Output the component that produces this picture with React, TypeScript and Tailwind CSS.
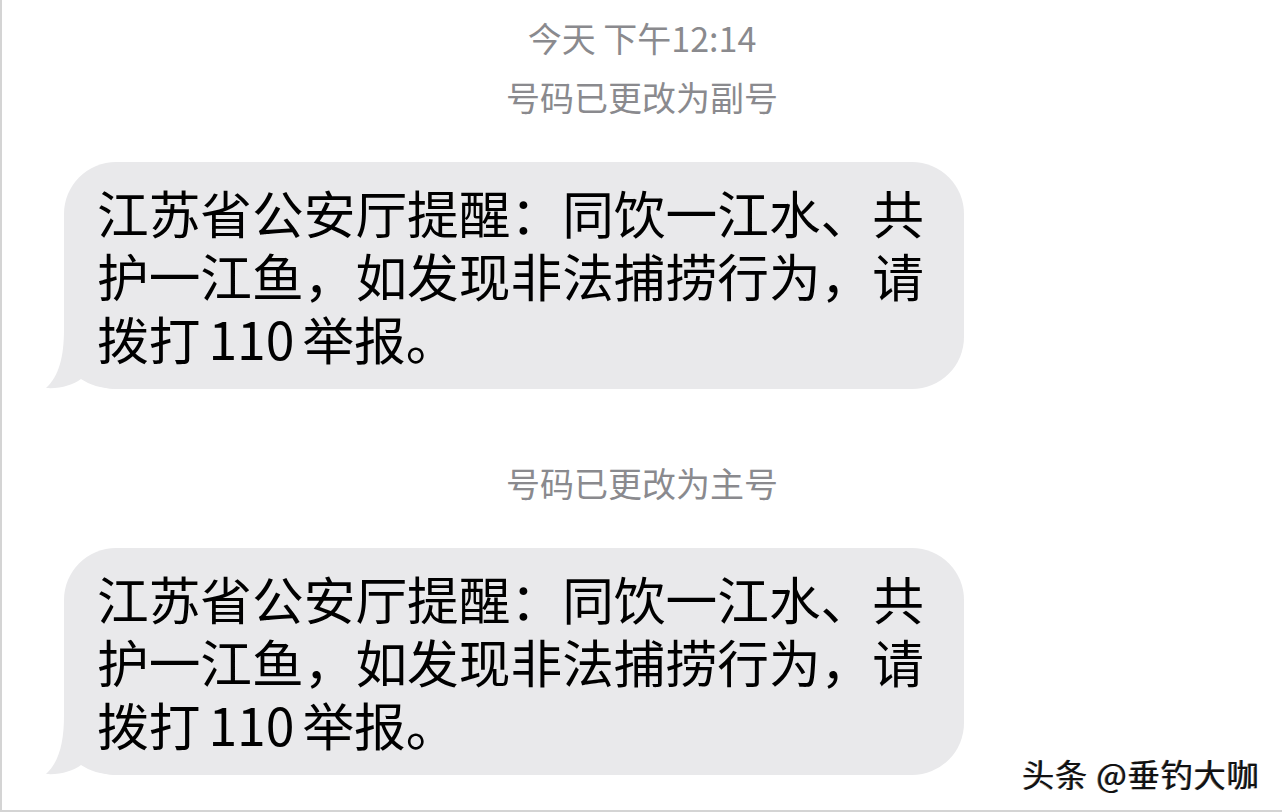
import React from 'react';

const cjk = { fontFamily: '"Noto Sans CJK SC", "Noto Sans", sans-serif' };

const lines = [
  '江苏省公安厅提醒：同饮一江水、共',
  '护一江鱼，如发现非法捕捞行为，请',
];

const Bubble = () => (
  <div className="relative ml-[62px] w-[900px] rounded-[52px] bg-[#e9e9eb] pl-[33px] pr-6 pt-[18px] pb-[20px]">
    {/* tail */}
    <svg
      className="absolute bottom-0 left-[-18px]"
      width="70"
      height="60"
      viewBox="0 0 70 60"
    >
      <path
        d="M18 0 C18 28 13 47 0 59 C14 60 27 56 35 50 C44 56 54 59 70 60 L70 0 Z"
        fill="#e9e9eb"
      />
    </svg>
    <div className="relative text-[51.7px] leading-[63px] text-black">
      {lines.map((l) => (
        <div key={l} className="whitespace-nowrap">
          {l}
        </div>
      ))}
      <div className="whitespace-nowrap">
        拨打<span className="ml-[8px] mr-[8px]">110</span>举报。
      </div>
    </div>
  </div>
);

const Notice = ({ text, className }: { text: string; className?: string }) => (
  <div className={`text-center text-[34px] leading-[40px] text-[#8a8a8e] ${className ?? ''}`}>
    {text}
  </div>
);

export default function App() {
  return (
    <div
      style={cjk}
      className="relative h-[812px] w-[1282px] overflow-hidden border-b-2 border-l-2 border-[#d4d4d4] bg-white"
    >
      <div className="flex flex-col pt-[18px]">
        <div className="text-center text-[34px] leading-[40px] text-[#8a8a8e]">
          今天 下午12:14
        </div>
        <Notice text="号码已更改为副号" className="mt-[19px]" />
        <div className="mt-[45px]">
          <Bubble />
        </div>
        <Notice text="号码已更改为主号" className="mt-[74px]" />
        <div className="mt-[45px]">
          <Bubble />
        </div>
      </div>

      {/* watermark */}
      <div className="absolute bottom-[18px] right-[22px] text-[32px] leading-[38px] tracking-[1px] text-[#111] [text-shadow:1px_1px_0_#ffffff,-1px_0_0_#555]">
        头条 @垂钓大咖
      </div>
    </div>
  );
}
